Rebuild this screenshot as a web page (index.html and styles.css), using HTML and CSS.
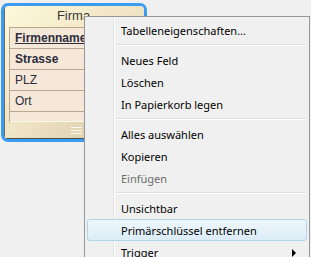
FILE: index.html
```html
<!DOCTYPE html>
<html lang="de">

<head>
    <meta charset="UTF-8">
    <title>Firma</title>
    <link rel="stylesheet" href="styles.css">
</head>

<body>

    <!-- Table window -->
    <div class="table-window">
        <div class="table-inner">
            <div class="table-title">Firma</div>
            <div class="field-list">
                <div class="field key">Firmenname</div>
                <div class="field bold">Strasse</div>
                <div class="field">PLZ</div>
                <div class="field">Ort</div>
                <div class="field empty"></div>
            </div>
            <div class="table-foot">
                <span class="grip"></span>
            </div>
        </div>
    </div>

    <!-- Context menu -->
    <div class="context-menu">
        <div class="menu-item">Tabelleneigenschaften...</div>
        <div class="menu-sep"></div>
        <div class="menu-item">Neues Feld</div>
        <div class="menu-item">Löschen</div>
        <div class="menu-item">In Papierkorb legen</div>
        <div class="menu-sep"></div>
        <div class="menu-item">Alles auswählen</div>
        <div class="menu-item">Kopieren</div>
        <div class="menu-item disabled">Einfügen</div>
        <div class="menu-sep"></div>
        <div class="menu-item">Unsichtbar</div>
        <div class="menu-item active">Primärschlüssel entfernen</div>
        <div class="menu-item submenu">Trigger</div>
    </div>

</body>

</html>
```

FILE: styles.css
```css
body {
    margin: 0;
    padding: 0;
    background-color: #f0f0f0;
    font-family: "Liberation Sans", Arial, sans-serif;
    overflow: hidden;
}

/* Table window */
.table-window {
    margin: 3px 0 0 1px;
    width: 146px;
    height: 139px;
    box-sizing: border-box;
    border: 3px solid #3a9bf3;
    border-radius: 7px;
    overflow: hidden;
}

.table-inner {
    height: 100%;
    box-sizing: border-box;
    border-left: 1px solid #6a6a6a;
    border-bottom: 1px solid #4e4e4e;
    border-top-left-radius: 4px;
    background: linear-gradient(135deg, #fdf9da 0%, #efe4c4 50%, #d5c5a5 100%);
    display: flex;
    flex-direction: column;
}

.table-title {
    height: 21px;
    line-height: 19px;
    text-align: center;
    font-size: 13px;
    color: #3a3a3a;
    padding-right: 2px;
}

.field-list {
    margin-left: 4px;
    margin-right: 4px;
    border-top: 1px solid #b9a68f;
    border-left: 1px solid #b9a68f;
    background-color: #f6e8d9;
}

.field {
    height: 20px;
    line-height: 20px;
    padding-left: 5px;
    font-size: 12px;
    color: #2c2c3c;
    border-bottom: 1px solid #b9a68f;
}

.field.key {
    font-weight: bold;
    text-decoration: underline;
}

.field.bold {
    font-weight: bold;
}

.field.empty {
    height: 9px;
    border-bottom: 1px solid #fff8e4;
}

.table-foot {
    flex: 1;
    display: flex;
    justify-content: center;
    align-items: center;
    padding-left: 4px;
}

.grip {
    width: 11px;
    height: 5px;
    border-top: 1px solid #fffbee;
    border-bottom: 1px solid #fffbee;
    position: relative;
}

.grip::after {
    content: "";
    position: absolute;
    left: 0;
    right: 0;
    top: 2px;
    border-top: 1px solid #fffbee;
}

/* Context menu */
.context-menu {
    position: absolute;
    left: 84px;
    top: 16px;
    width: 226px;
    height: 241px;
    overflow: hidden;
    box-sizing: border-box;
    border: 1px solid #979797;
    border-bottom: none;
    padding: 2px;
    background: linear-gradient(to right, #f0f0f0 28px, #e2e3e3 28px, #e2e3e3 29px, #ffffff 29px, #ffffff 30px, #f0f0f0 30px);
    font-family: "Noto Sans", "Segoe UI", sans-serif;
    font-size: 11px;
}

.menu-item {
    position: relative;
    height: 22px;
    line-height: 21px;
    padding-left: 33px;
    color: #000;
    box-sizing: border-box;
    border: 1px solid transparent;
    border-radius: 3px;
}

.menu-item.disabled {
    color: #6d6d6d;
}

.menu-item.active {
    border-color: #aed5ea;
    background: linear-gradient(to bottom, #eef6fb, #dcedf8);
}

.menu-item.submenu::after {
    content: "";
    position: absolute;
    right: 10px;
    top: 7px;
    border-left: 4px solid #000;
    border-top: 4px solid transparent;
    border-bottom: 4px solid transparent;
}

.menu-sep {
    height: 8px;
    margin-left: 28px;
    margin-right: 1px;
    background: linear-gradient(to bottom, transparent 3px, #e0e0e0 3px, #e0e0e0 4px, #ffffff 4px, #ffffff 5px, transparent 5px);
}
```
